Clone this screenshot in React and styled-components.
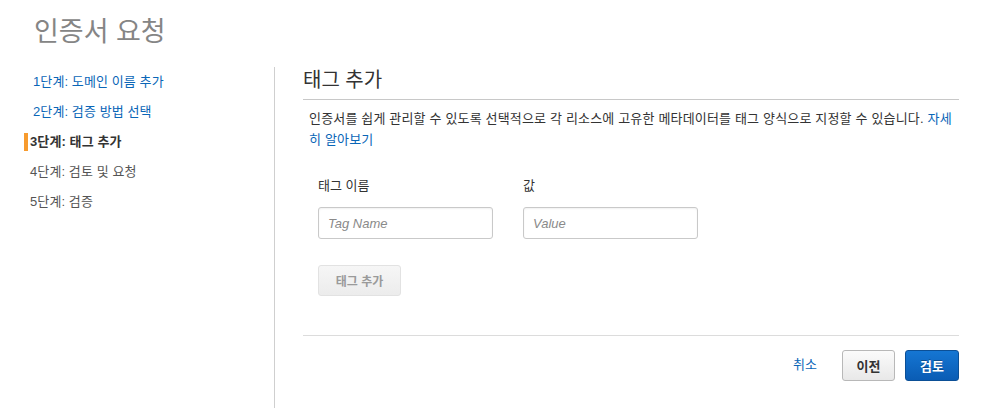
import React from "react";
import styled, { createGlobalStyle } from "styled-components";

const Global = createGlobalStyle`
  html, body { margin: 0; padding: 0; background: #fff; }
  body {
    font-family: "Liberation Sans", "Noto Sans CJK KR", Arial, sans-serif;
    font-size: 13px;
    color: #444;
  }
  * { box-sizing: border-box; }
`;

const Page = styled.div`
  width: 981px;
  height: 408px;
  overflow: hidden;
  display: flex;
  flex-direction: column;
`;

const Title = styled.h1`
  margin: 0;
  padding: 14px 0 0 34px;
  height: 67px;
  font-size: 27px;
  font-weight: 400;
  line-height: 36px;
  color: #858585;
  letter-spacing: 0;
`;

const Body = styled.div`
  flex: 1;
  display: flex;
`;

const Sidebar = styled.nav`
  width: 275px;
  border-right: 1px solid #cfcfcf;
  display: flex;
  flex-direction: column;
`;

const Step = styled.div`
  height: 30px;
  line-height: 30px;
  font-size: 13px;
  letter-spacing: 0.1px;
  padding-left: ${(p) => (p.$link ? "33px" : "30px")};
  color: ${(p) => (p.$link ? "#0a66b7" : p.$active ? "#333" : "#555")};
  font-weight: ${(p) => (p.$active ? 700 : 400)};
  position: relative;
  &::before {
    content: "";
    display: ${(p) => (p.$active ? "block" : "none")};
    position: absolute;
    left: 24px;
    top: 6px;
    width: 4px;
    height: 18px;
    background: #f79b2e;
  }
`;

const Content = styled.main`
  flex: 1;
  padding: 0 22px 0 28px;
  display: flex;
  flex-direction: column;
`;

const SectionTitle = styled.h2`
  margin: 0;
  font-size: 20px;
  font-weight: 400;
  color: #333;
  height: 33px;
  line-height: 26px;
  border-bottom: 1px solid #c8c8c8;
`;

const Description = styled.p`
  margin: 0;
  padding: 8px 0 0 6px;
  font-size: 13px;
  line-height: 21px;
  letter-spacing: 0.17px;
  color: #333;
`;

const Link = styled.a`
  color: #0a66b7;
  text-decoration: none;
`;

const Form = styled.div`
  padding: 27px 0 0 15px;
  display: flex;
  flex-direction: column;
`;

const FieldRow = styled.div`
  display: flex;
  gap: 30px;
`;

const Field = styled.div`
  display: flex;
  flex-direction: column;
`;

const Label = styled.label`
  font-size: 13px;
  color: #333;
  line-height: 18px;
  height: 30px;
`;

const Input = styled.input`
  width: 175px;
  height: 32px;
  border: 1px solid #c9c9c9;
  border-radius: 3px;
  padding: 0 9px;
  font-size: 13px;
  font-family: "Liberation Sans", "Noto Sans CJK KR", Arial, sans-serif;
  box-shadow: inset 0 1px 2px rgba(0, 0, 0, 0.06);
  &::placeholder {
    color: #8a8a8a;
    font-style: italic;
  }
`;

const DisabledButton = styled.button`
  margin-top: 26px;
  width: 83px;
  height: 31px;
  border: 1px solid #e2e2e2;
  border-radius: 3px;
  background: linear-gradient(#f6f6f6, #ececec);
  color: #9a9a9a;
  font-weight: 700;
  font-size: 12px;
  font-family: "Liberation Sans", "Noto Sans CJK KR", Arial, sans-serif;
  align-self: flex-start;
`;

const Footer = styled.div`
  margin-top: 39px;
  border-top: 1px solid #dcdcdc;
  padding-top: 14px;
  display: flex;
  justify-content: flex-end;
  align-items: center;
`;

const CancelLink = styled.a`
  color: #0a66b7;
  font-size: 13px;
  margin-right: 25px;
  margin-top: -4px;
`;

const Button = styled.button`
  height: 31px;
  width: ${(p) => (p.$primary ? "54px" : "53px")};
  margin-left: ${(p) => (p.$primary ? "10px" : "0")};
  border-radius: 3px;
  font-weight: 700;
  font-size: 13px;
  font-family: "Liberation Sans", "Noto Sans CJK KR", Arial, sans-serif;
  border: 1px solid ${(p) => (p.$primary ? "#0b4f96" : "#b8b8b8")};
  color: ${(p) => (p.$primary ? "#fff" : "#333")};
  background: ${(p) =>
    p.$primary
      ? "linear-gradient(#1576d3, #0a5cb4)"
      : "linear-gradient(#fbfbfb, #e8e8e8)"};
  text-shadow: ${(p) => (p.$primary ? "0 -1px 0 rgba(0,0,0,0.3)" : "none")};
`;

export default function App() {
  return (
    <Page>
      <Global />
      <Title>인증서 요청</Title>
      <Body>
        <Sidebar>
          <Step $link>1단계: 도메인 이름 추가</Step>
          <Step $link>2단계: 검증 방법 선택</Step>
          <Step $active>3단계: 태그 추가</Step>
          <Step>4단계: 검토 및 요청</Step>
          <Step>5단계: 검증</Step>
        </Sidebar>
        <Content>
          <SectionTitle>태그 추가</SectionTitle>
          <Description>
            인증서를 쉽게 관리할 수 있도록 선택적으로 각 리소스에 고유한 메타데이터를 태그 양식으로 지정할 수 있습니다.{" "}
            <Link href="#">자세히 알아보기</Link>
          </Description>
          <Form>
            <FieldRow>
              <Field>
                <Label>태그 이름</Label>
                <Input placeholder="Tag Name" />
              </Field>
              <Field>
                <Label>값</Label>
                <Input placeholder="Value" />
              </Field>
            </FieldRow>
            <DisabledButton disabled>태그 추가</DisabledButton>
          </Form>
          <Footer>
            <CancelLink>취소</CancelLink>
            <Button>이전</Button>
            <Button $primary>검토</Button>
          </Footer>
        </Content>
      </Body>
    </Page>
  );
}
